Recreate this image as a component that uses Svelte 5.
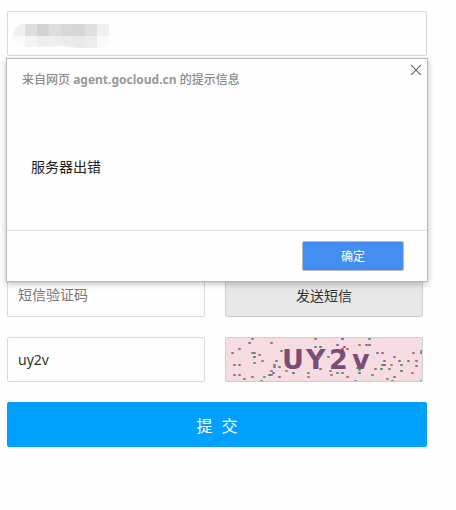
<script lang="ts">
  type Dot = [x: number, y: number, color: string];

  let phone = $state("");
  let smsCode = $state("");
  let captcha = $state("uy2v");
  let alertOpen = $state(true);

  const mosaic = [
    ["#f0f0f0", "#dedede", "#d3d3d3", "#dddddd", "#d8d8d8", "#d6d6d6", "#dfdfdf", "#f0f0f0"],
    ["#fafafa", "#f4f4f4", "#eeeeee", "#eeeeee", "#ececec", "#e9e9e9", "#ececec", "#fafafa"],
  ];

  const captchaLetters = [
    { char: "U", x: 56 },
    { char: "Y", x: 80 },
    { char: "2", x: 103 },
    { char: "v", x: 126 },
  ];

  const green = "#3f8a55";
  const olive = "#8a7a3c";
  const blue = "#5068a0";
  const teal = "#2f7277";
  const plum = "#94548f";
  const brown = "#94604f";

  const dots: Dot[] = [
    [25, 0, olive], [22, 4, blue], [44, 4, brown], [12, 10, plum], [5, 14, brown],
    [25, 14, olive], [27, 14, green], [27, 18, teal], [32, 16, plum], [54, 12, green],
    [35, 22, olive], [27, 24, green], [7, 26, plum], [12, 26, brown], [47, 26, brown],
    [47, 28, plum], [49, 22, blue], [44, 32, plum], [52, 28, green], [52, 38, brown],
    [7, 36, brown], [12, 36, plum], [17, 40, green], [25, 38, brown], [37, 38, olive],
    [34, 42, green], [42, 36, teal], [44, 36, green], [46, 34, blue], [59, 32, olive],
    [66, 34, teal], [81, 38, olive], [81, 34, green], [88, 0, brown], [88, 8, blue],
    [93, 8, teal], [103, 32, olive], [115, 0, teal], [142, 0, green], [110, 6, blue],
    [132, 6, olive], [139, 6, blue], [142, 6, teal], [120, 10, brown], [150, 14, blue],
    [155, 14, plum], [167, 18, plum], [186, 14, brown], [194, 12, olive], [194, 14, green],
    [172, 22, blue], [181, 22, green], [189, 22, brown], [157, 22, brown], [155, 26, green],
    [157, 26, teal], [162, 30, green], [154, 30, teal], [164, 26, olive], [174, 26, green],
    [189, 27, blue], [148, 30, brown], [110, 34, green], [115, 34, green], [104, 36, olive],
    [120, 38, brown], [145, 36, green], [128, 42, blue], [160, 40, olive], [167, 38, plum],
    [174, 32, teal], [165, 42, green], [185, 34, olive], [194, 42, green], [132, 34, teal],
  ];

  // specks that fall across the letters
  const frontDots: Dot[] = [
    [61, 24, teal], [91, 18, olive], [101, 18, green], [93, 30, brown], [115, 10, "#a8324e"],
    [117, 8, "#a8324e"], [115, 12, "#a8324e"], [130, 29, "#33914a"], [132, 31, "#33914a"],
  ];

  function closeAlert() {
    alertOpen = false;
  }

  function handleSubmit(event: SubmitEvent) {
    event.preventDefault();
    alertOpen = true;
  }
</script>

<main class="page">
  <form onsubmit={handleSubmit}>
    <div class="phone">
      <input type="tel" aria-label="手机号" bind:value={phone} />
      <svg class="mosaic" width="96" height="24" viewBox="0 0 96 24" aria-hidden="true">
        <clipPath id="smudge">
          <path d="M8 0H96V20Q92 24 84 24H66Q56 23 48 22Q36 23 26 23H10Q0 20 0 12Q0 4 8 0Z" />
        </clipPath>
        <g clip-path="url(#smudge)">
          {#each mosaic as row, r}
            {#each row as color, c}
              <rect x={c * 12} y={r * 12} width="12" height="12" fill={color} />
            {/each}
          {/each}
        </g>
      </svg>
    </div>

    <div class="codes">
      <input type="text" placeholder="短信验证码" aria-label="短信验证码" bind:value={smsCode} />
      <button type="button" class="send">发送短信</button>
      <input type="text" aria-label="图形验证码" bind:value={captcha} />
      <button type="button" class="captcha" aria-label="刷新图形验证码">
        <svg viewBox="0 0 196 43">
          {#each dots as [x, y, color]}
            <rect class="dot" {x} {y} width="3" height="2" rx="1" fill={color} />
          {/each}
          {#each captchaLetters as letter}
            <text x={letter.x} y="31">{letter.char}</text>
          {/each}
          {#each frontDots as [x, y, color]}
            <rect class="dot" {x} {y} width="3" height="2" rx="1" fill={color} />
          {/each}
        </svg>
      </button>
    </div>

    <button type="submit" class="submit"><span>提</span><span>交</span></button>
  </form>

  {#if alertOpen}
    <div class="dialog" role="alertdialog" aria-labelledby="alert-title" aria-describedby="alert-text">
      <h1 id="alert-title">来自网页 <b>agent.gocloud.cn</b> 的提示信息</h1>
      <button type="button" class="close" aria-label="关闭" onclick={closeAlert}>
        <svg width="10" height="10" viewBox="0 0 10 10">
          <path d="M0 0L10 10M10 0L0 10" />
        </svg>
      </button>
      <p id="alert-text">服务器出错</p>
      <footer>
        <button type="button" class="confirm" onclick={closeAlert}>确定</button>
      </footer>
    </div>
  {/if}
</main>

<style>
  :global(body) {
    background: #fefefe;
  }

  .page {
    position: relative;
    padding: 11px 29px 40px 7px;
    font-family: "Noto Sans", "Noto Sans CJK SC", sans-serif;
    font-size: 14px;
    color: #333;
  }

  input,
  button {
    box-sizing: border-box;
    width: 100%;
    height: 45px;
    margin: 0;
    border: 1px solid #d9d9d9;
    border-radius: 2px;
    font: inherit;
    color: inherit;
  }

  input {
    display: block;
    padding: 0 10px;
    background: #fefefe;
    outline: 0;
  }

  input::placeholder {
    color: #777;
    opacity: 1;
  }

  button {
    display: flex;
    align-items: center;
    justify-content: center;
    padding: 0;
    cursor: pointer;
  }

  .phone {
    position: relative;
  }

  .mosaic {
    position: absolute;
    top: 13px;
    left: 6px;
  }

  .codes {
    display: grid;
    grid-template-columns: 1fr 1fr;
    gap: 20px;
    margin-top: 216px;
    padding-right: 4px;
  }

  .send {
    border-color: #d0d0d0;
    background: #e7e7e7;
  }

  .captcha {
    overflow: hidden;
    border-color: #d0cfd0;
    background: #f7dbe3;
  }

  .captcha svg {
    display: block;
    width: 100%;
    height: 43px;
  }

  .captcha text {
    font-family: "DejaVu Sans", sans-serif;
    font-size: 27px;
    font-weight: bold;
    fill: #7a4d76;
  }

  .dot {
    opacity: 0.85;
  }

  .submit {
    gap: 9px;
    margin-top: 20px;
    border: 0;
    background: #00a0ff;
    font-size: 16px;
    color: #fff;
  }

  .dialog {
    position: absolute;
    top: 58px;
    right: 28px;
    left: 6px;
    border: 1px solid #b8b8b8;
    background: #fefefe;
    box-shadow: 0 2px 6px rgba(0, 0, 0, 0.25);
  }

  h1 {
    margin: 0;
    padding: 12px 15px 0;
    font-size: 12px;
    font-weight: 500;
    line-height: 18px;
    color: #8c8c8c;
  }

  h1 b {
    font-weight: bold;
    color: #999;
  }

  .close {
    position: absolute;
    top: 2px;
    right: 2px;
    width: 18px;
    height: 18px;
    border: 0;
    background: none;
  }

  .close path {
    fill: none;
    stroke: #666;
    stroke-width: 1.2;
  }

  p {
    margin: 0;
    padding: 68px 24px 53px;
    line-height: 20px;
    color: #222;
  }

  footer {
    display: flex;
    justify-content: flex-end;
    padding: 10px 23px;
    border-top: 1px solid #ddd;
  }

  .confirm {
    width: 102px;
    height: 30px;
    border-color: #b8b8b8;
    background: #448ef2;
    font-size: 12px;
    color: #fff;
  }
</style>
